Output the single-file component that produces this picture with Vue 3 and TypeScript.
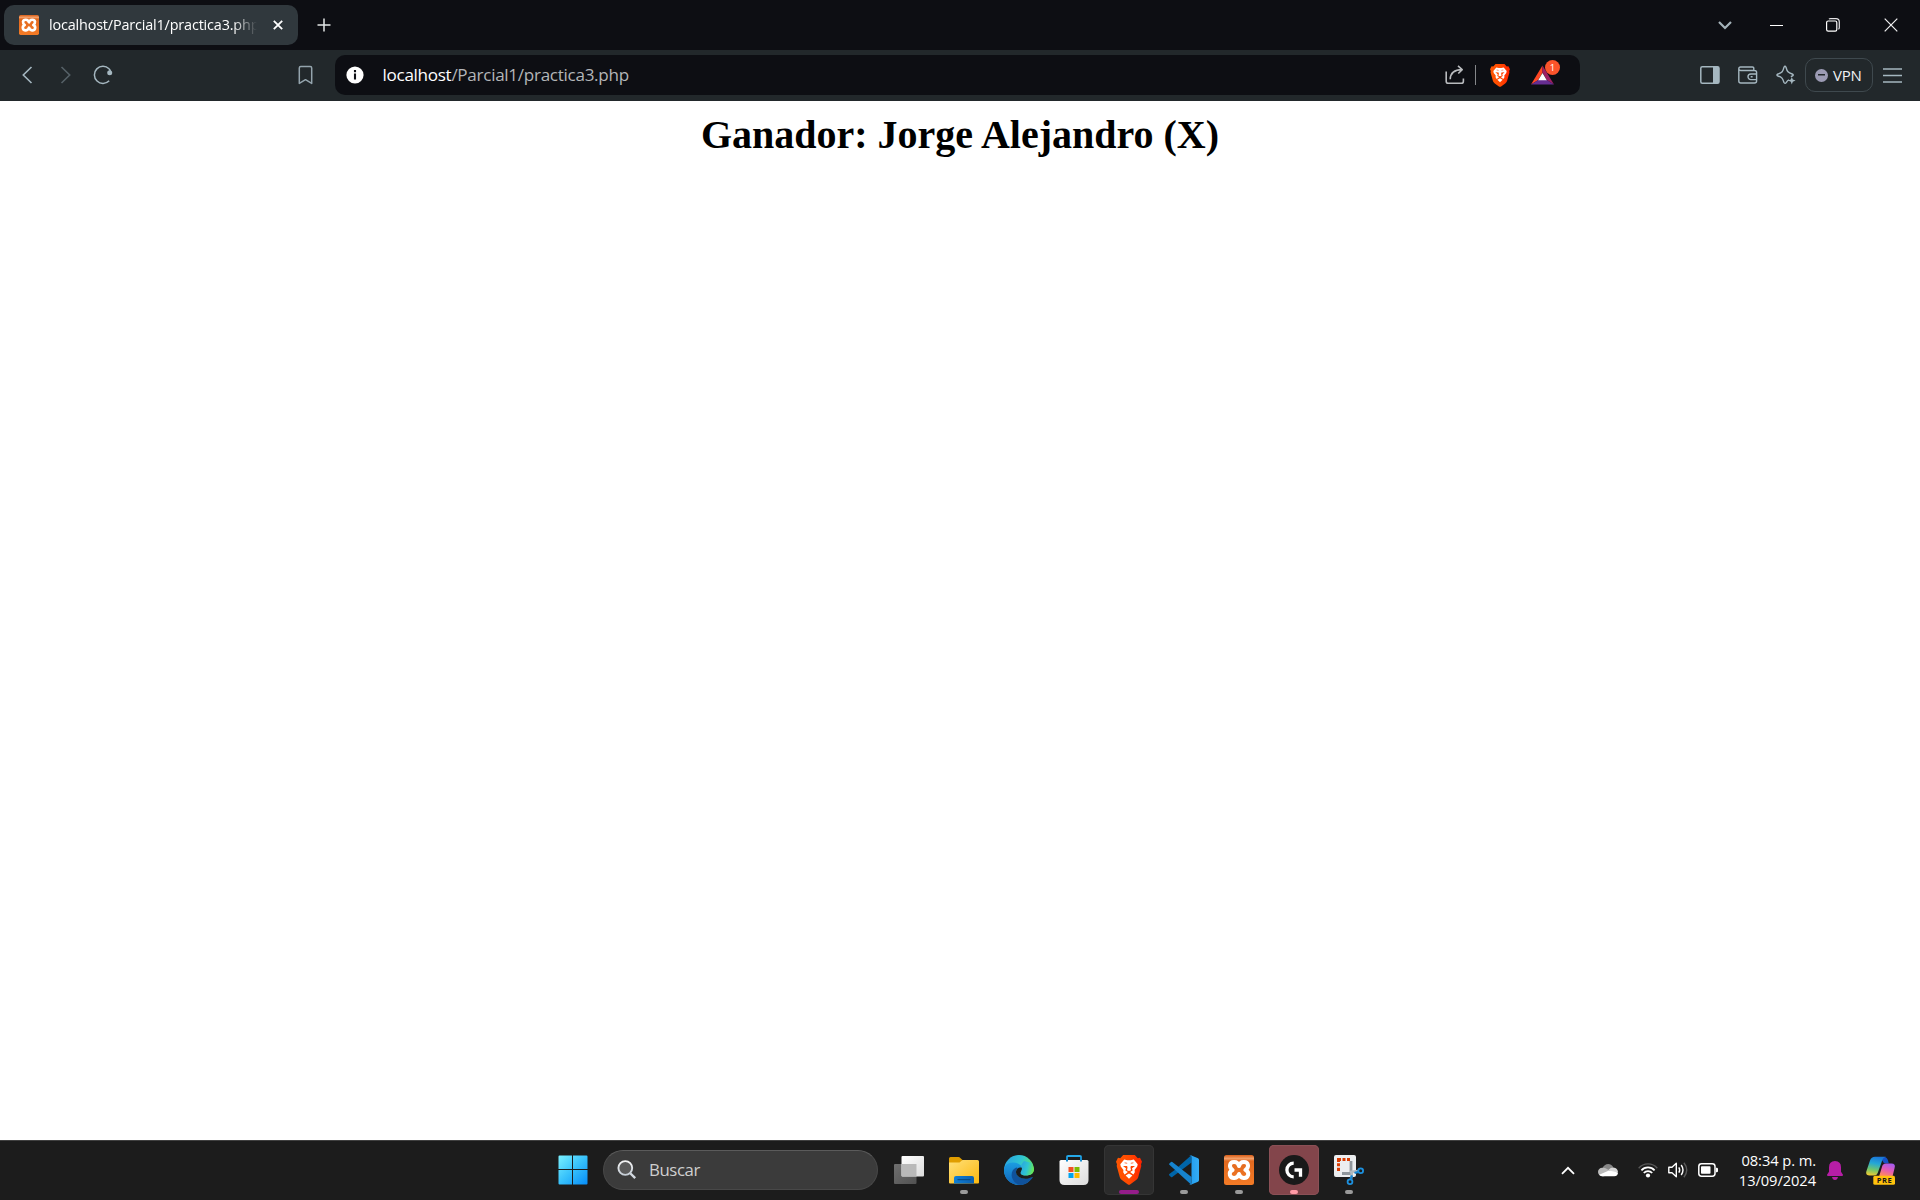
<script setup lang="ts">
const windowTitle = 'localhost/Parcial1/practica3.php'
const urlHost = 'localhost'
const urlPath = '/Parcial1/practica3.php'
const winner = 'Ganador: Jorge Alejandro (X)'
const clock = { time: '08:34 p. m.', date: '13/09/2024' }

interface TaskItem {
  id: string
  state?: 'open' | 'active' | 'alert'
}

const tasks: TaskItem[] = [
  { id: 'views' },
  { id: 'files', state: 'open' },
  { id: 'edge' },
  { id: 'store' },
  { id: 'brave', state: 'active' },
  { id: 'code', state: 'open' },
  { id: 'xampp', state: 'open' },
  { id: 'ghub', state: 'alert' },
  { id: 'snip', state: 'open' },
]
</script>

<template>
  <div class="desktop">
    <!-- shared artwork -->
    <svg class="defs" width="0" height="0" aria-hidden="true">
      <defs>
        <linearGradient id="g-brave" x1="0" y1="0" x2="1" y2="0">
          <stop offset="0" stop-color="#ff5601" /><stop offset=".5" stop-color="#ff4a00" /><stop offset="1" stop-color="#ff2200" />
        </linearGradient>
        <linearGradient id="g-win" x1="0" y1="0" x2="1" y2="1">
          <stop offset="0" stop-color="#7af1ff" /><stop offset=".5" stop-color="#37c1fb" /><stop offset="1" stop-color="#068cf8" />
        </linearGradient>
        <linearGradient id="g-lens" x1="0" y1="0" x2="0" y2="1">
          <stop offset="0" stop-color="#f4f4f4" /><stop offset="1" stop-color="#c5cdd6" />
        </linearGradient>
        <linearGradient id="g-glass" x1="0" y1="0" x2="1" y2="1">
          <stop offset="0" stop-color="#6f6f6f" /><stop offset="1" stop-color="#515151" />
        </linearGradient>
        <linearGradient id="g-white" x1="0" y1="0" x2="1" y2="1">
          <stop offset="0" stop-color="#ffffff" /><stop offset="1" stop-color="#dcdcdc" />
        </linearGradient>
        <linearGradient id="g-folder" x1="0" y1="0" x2="1" y2="1">
          <stop offset="0" stop-color="#ffe07a" /><stop offset="1" stop-color="#fcb80e" />
        </linearGradient>
        <linearGradient id="g-tray" x1="0" y1="0" x2="1" y2="0">
          <stop offset="0" stop-color="#0f7fd6" /><stop offset="1" stop-color="#0b5fae" />
        </linearGradient>
        <linearGradient id="g-edge-top" x1="0" y1=".3" x2="1" y2=".6">
          <stop offset="0" stop-color="#2aa5e0" /><stop offset=".5" stop-color="#2fc6d2" /><stop offset="1" stop-color="#6be94c" />
        </linearGradient>
        <linearGradient id="g-edge-mid" x1="0" y1="0" x2="0" y2="1">
          <stop offset="0" stop-color="#1b9de2" /><stop offset="1" stop-color="#1163b9" />
        </linearGradient>
        <linearGradient id="g-xampp" x1="0" y1="0" x2="0" y2="1">
          <stop offset="0" stop-color="#d85d16" /><stop offset=".12" stop-color="#f3a06a" /><stop offset=".2" stop-color="#e2691f" /><stop offset="1" stop-color="#f47b26" />
        </linearGradient>
        <linearGradient id="g-pilot-a" x1="0.5" y1="0" x2="0.3" y2="1">
          <stop offset="0" stop-color="#1b78d8" /><stop offset=".35" stop-color="#24a7d6" /><stop offset=".7" stop-color="#72c66a" /><stop offset="1" stop-color="#efcb32" />
        </linearGradient>
        <linearGradient id="g-pilot-b" x1=".7" y1="0" x2=".3" y2="1">
          <stop offset="0" stop-color="#a55bf0" /><stop offset=".5" stop-color="#e35bb7" /><stop offset="1" stop-color="#ff8a5c" />
        </linearGradient>
        <linearGradient id="g-code" x1="0" y1="0" x2="1" y2="0">
          <stop offset="0" stop-color="#1f9cf0" /><stop offset="1" stop-color="#35adf5" />
        </linearGradient>
        <symbol id="lion" viewBox="0 0 26 30">
          <path d="M7.2 0H18.8L21.8 3.2L24 2.8L26 6.8L25 9.2L25.3 11L22.2 22.2Q21.6 24 19.8 25.3L14.4 29.2Q13 30.4 11.6 29.2L6.2 25.3Q4.4 24 3.8 22.2L.7 11L1 9.2L0 6.8L2 2.8L4.2 3.2Z" fill="url(#g-brave)" />
          <path d="M8.2 4.5L11.3 5.2H14.7L17.8 4.5L21.7 9.2L21.2 11.6L18.6 15.1L18.8 17.2L17.4 19.6L14.6 17.6L14.4 16.8L16.6 15.5L16 13.3L19 10.9L14.9 11L14.5 12.6L15 15.2L13 16.1L11 15.2L11.5 12.6L11.1 11L7 10.9L10 13.3L9.4 15.5L11.6 16.8L11.4 17.6L8.6 19.6L7.2 17.2L7.4 15.1L4.8 11.6L4.3 9.2Z" fill="#fff" />
          <path d="M9.6 20.5L13 18.6L16.4 20.5L13 23.8Z" fill="#fff" />
          <path d="M8.6 7.8L11.2 8.3M17.4 7.8L14.8 8.3" stroke="#fb5420" stroke-width=".8" />
        </symbol>
        <symbol id="xampp-mark" viewBox="0 0 30 30">
          <rect width="30" height="30" rx="2.5" fill="url(#g-xampp)" />
          <path d="M15 11C13.6 5.6 6.6 6.2 6 10.2C5.7 12.4 7 13.8 8.6 15C6.2 16 5.3 18 5.9 20.2C7.2 24.2 13.6 24 15 19C16.4 24 22.8 24.2 24.1 20.2C24.7 18 23.8 16 21.4 15C23 13.8 24.3 12.4 24 10.2C23.4 6.2 16.4 5.6 15 11Z" fill="none" stroke="#fff" stroke-width="4" stroke-linejoin="round" />
        </symbol>
      </defs>
    </svg>

    <header class="tabstrip">
      <div class="tab">
        <svg class="favicon" width="20" height="20"><use href="#xampp-mark" /></svg>
        <span class="tab-title">{{ windowTitle }}</span>
        <svg class="tab-close" width="10" height="10" viewBox="0 0 10 10"><path d="M.8 .8L9.2 9.2M9.2 .8L.8 9.2" stroke="#fff" stroke-width="1.8" /></svg>
      </div>
      <svg class="new-tab" width="14" height="14" viewBox="0 0 14 14"><path d="M7 .5V13.5M.5 7H13.5" stroke="#e4e7e8" stroke-width="1.5" /></svg>
      <div class="window-controls">
        <svg class="chev" width="14" height="10" viewBox="0 0 14 10"><path d="M1 2L7 8L13 2" fill="none" stroke="#a5b3ba" stroke-width="2.2" /></svg>
        <svg class="mini" width="13" height="13" viewBox="0 0 13 13"><path d="M0 6.5H13" stroke="#fff" /></svg>
        <svg class="rest" width="14" height="14" viewBox="0 0 14 14"><rect x=".6" y="3" width="10.2" height="10.2" rx="1.6" fill="none" stroke="#fff" stroke-width="1.2" /><path d="M3 1.1Q3.4 .6 4.6 .6H10Q13.3 .6 13.3 4V9.4Q13.3 10.8 12.4 11.2" fill="none" stroke="#e4e4e6" stroke-width="1.2" /></svg>
        <svg class="quit" width="14" height="14" viewBox="0 0 14 14"><path d="M.7 .7L13.3 13.3M13.3 .7L.7 13.3" stroke="#f1f1f2" stroke-width="1.2" /></svg>
      </div>
    </header>

    <nav class="toolbar">
      <svg class="back" width="11" height="18" viewBox="0 0 11 18"><path d="M9.5 1L1.3 9L9.5 17" fill="none" stroke="#a5b7c0" stroke-width="1.6" /></svg>
      <svg class="forward" width="11" height="18" viewBox="0 0 11 18"><path d="M1.5 1L9.7 9L1.5 17" fill="none" stroke="#566167" stroke-width="1.6" /></svg>
      <svg class="reload" width="20" height="20" viewBox="0 0 20 20"><path d="M16 3.7A8.6 8.6 0 1 0 16.2 15.8" fill="none" stroke="#a5b7c0" stroke-width="1.5" /><circle cx="16.7" cy="7.7" r="2.5" fill="#a5b7c0" /><path d="M16 3.7L17.5 6" stroke="#a5b7c0" stroke-width="1.5" /></svg>
      <svg class="bookmark" width="15" height="20" viewBox="0 0 15 20"><path d="M2.8 1.5H12.2Q13.7 1.5 13.7 3V18.4L7.5 14.7L1.3 18.4V3Q1.3 1.5 2.8 1.5Z" fill="none" stroke="#94a4ad" stroke-width="1.5" stroke-linejoin="round" /></svg>

      <div class="address">
        <svg class="info" width="18" height="18" viewBox="0 0 18 18"><circle cx="9" cy="9" r="8.6" fill="#fff" /><path d="M9 4V6.2M9 7.6V13.4" stroke="#0e0f14" stroke-width="2.1" /></svg>
        <span class="url"><b>{{ urlHost }}</b>{{ urlPath }}</span>
        <svg class="share" width="20" height="20" viewBox="0 0 20 20"><path d="M1.2 6.5V16.2Q1.2 18.3 3.3 18.3H16.3Q18.4 18.3 18.4 16.2V13.4M5.2 14.2C5.4 8.5 9 4.7 17 4.6M13 .9L17.2 4.6L13.3 8.5" fill="none" stroke="#b9bbbe" stroke-width="1.6" stroke-linejoin="round" /></svg>
        <i class="divider"></i>
        <svg class="shield" width="20" height="23"><use href="#lion" /></svg>
        <div class="rewards">
          <svg width="23" height="20" viewBox="0 0 23 20"><path d="M11.5 .5L0 19.5L7.2 15L11.5 7.6Z" fill="#ff4724" /><path d="M11.5 .5L23 19.5L15.8 15L11.5 7.6Z" fill="#9e1f63" /><path d="M0 19.5H23L15.8 15H7.2Z" fill="#662d91" /><path d="M11.5 8L7.2 15.2H15.8Z" fill="#fff" /></svg>
          <span class="badge">1</span>
        </div>
      </div>

      <svg class="side" width="20" height="18" viewBox="0 0 20 18"><rect x=".8" y=".8" width="18.2" height="16.4" rx="1.5" fill="none" stroke="#a5b7c0" stroke-width="1.5" /><path d="M13 1H19V17H13Z" fill="#a5b7c0" /></svg>
      <svg class="wallet" width="20" height="18" viewBox="0 0 20 18"><path d="M15.8 4V2.4Q15.8 1 14.4 1H2.5Q.8 1 .8 2.7V15Q.8 17 2.8 17H16.5Q18.6 17 18.6 15V6.5Q18.6 4.5 16.5 4.5H2.7Q.8 4.3 .8 2.7M18.6 8H12.8A2.8 2.8 0 0 0 12.8 13.6H18.6M12.7 10.8H14.6" fill="none" stroke="#a5b7c0" stroke-width="1.4" /></svg>
      <svg class="leo" width="20" height="20" viewBox="0 0 20 20"><path d="M13 14.8C11.6 15.2 10.8 16.5 10.2 17.6Q9 19 7.9 17.3C6.7 13.4 6 12.2 2 11Q-.2 10 2 9C6.2 7.7 6.9 6.7 8 2.2Q9 .2 10 2.2C11.2 6.7 12 7.7 16.2 9Q18.3 10 16.2 11L14.8 11.6" fill="none" stroke="#a5b7c0" stroke-width="1.4" /><path d="M15.8 12L16.8 14.6L19.6 15.6L16.8 16.7L15.8 19.4L14.8 16.7L12 15.6L14.8 14.6Z" fill="#a5b7c0" /></svg>
      <div class="vpn"><i></i><span>VPN</span></div>
      <svg class="menu" width="19" height="15" viewBox="0 0 19 15"><path d="M0 1H19M0 7.5H19M0 14H19" stroke="#a5b7c0" stroke-width="1.5" /></svg>
    </nav>

    <main class="page"><h1>{{ winner }}</h1></main>

    <footer class="taskbar">
      <svg class="start" width="30" height="30" viewBox="0 0 30 30"><path d="M1.5 .5H14V14H.5V1.5Q.5 .5 1.5 .5ZM15 .5H28.5Q29.5 .5 29.5 1.5V14H15ZM.5 15H14V29.5H1.5Q.5 29.5 .5 28.5ZM15 15H29.5V28.5Q29.5 29.5 28.5 29.5H15Z" fill="url(#g-win)" /></svg>
      <div class="search">
        <svg width="20" height="20" viewBox="0 0 20 20"><path d="M13 13L18.2 18.2" stroke="#d3d9e0" stroke-width="2.4" /><circle cx="8.3" cy="8" r="6.9" fill="#5a5a5a" stroke="url(#g-lens)" stroke-width="1.9" /></svg>
        <span>Buscar</span>
      </div>

      <div class="tasks">
        <div v-for="t in tasks" :key="t.id" class="task" :class="t.state">
          <svg width="30" height="30" viewBox="0 0 30 30">
            <template v-if="t.id === 'views'">
              <rect x="0" y="9" width="22.5" height="20" rx="1" fill="url(#g-glass)" />
              <rect x="7.5" y="1" width="22.5" height="20.5" rx="1" fill="url(#g-white)" />
              <path d="M7.5 9H22.5V21.5H8.5Q7.5 21.5 7.5 20.5Z" fill="#b9b9b9" />
            </template>
            <template v-else-if="t.id === 'files'">
              <path d="M0 3.5Q0 2 1.5 2H9.5Q10.5 2 11.3 2.9L13.5 5V9H0Z" fill="#e09d00" />
              <path d="M0 7.5H10.5L13.5 5H28.5Q30 5 30 6.5V27.5Q30 28.5 29 28.5H1Q0 28.5 0 27.5Z" fill="url(#g-folder)" />
              <path d="M5 28.5V23Q5 21 7 21H23Q25 21 25 23V28.5Z" fill="url(#g-tray)" />
              <path d="M8.5 24.6H21.5" stroke="#074b86" stroke-width="1.2" />
            </template>
            <template v-else-if="t.id === 'edge'">
              <circle cx="15" cy="15" r="15" fill="url(#g-edge-top)" />
              <path d="M0 15C0 10.5 4 7.4 9 7.4C14 7.4 17.8 10 18.2 14C16.5 11.8 11.8 13 12 17.5C12.2 22 17 25.2 22 24.7C25 24.4 27 23.2 28 22.5C25.5 27 20.5 30 15 30C6.5 30 0 23.5 0 15Z" fill="url(#g-edge-mid)" />
              <path d="M12.3 12.5C8.5 13.8 6.8 18.5 8 22.5C9.3 27 13 29.6 17 30C22 29.5 26.5 26.2 28.8 22.2Q29 21.2 27.8 21.8C20 25.5 11.8 22 12 16.5C12.1 14.8 12.7 13.8 13.6 13Z" fill="#10529b" />
              <path d="M17.8 12.8C18.7 15.5 16.9 16.8 16.7 18C16.5 20 20 20.8 23.5 20.5C27.5 20.1 29.7 17.8 30 15V22H28C21 26.2 11.5 22.2 12 16.7C12.5 12.7 15.8 11.8 17.8 12.8Z" fill="#1c1c1c" />
              <path d="M17.2 10C19.2 14.5 16.7 16.3 16.7 17.8C16.6 19.9 20 20.6 23.5 20.3C27.5 20 29.7 17.8 30 14L28 8L20 6Z" fill="url(#g-edge-top)" />
            </template>
            <template v-else-if="t.id === 'store'">
              <path d="M8 7V2.2Q8 1 9.2 1H20.8Q22 1 22 2.2V7" fill="none" stroke="#25a9e8" stroke-width="2" />
              <path d="M.5 6.5Q.5 5 2 5H28Q29.5 5 29.5 6.5V25Q29.5 30 24.5 30H5.5Q.5 30 .5 25Z" fill="url(#g-white)" />
              <path d="M8 2V6.5M22 2V6.5" stroke="#168ed0" stroke-width="2" />
              <path d="M9.5 12H14.5V17H9.5Z" fill="#f25022" /><path d="M15.5 12H20.5V17H15.5Z" fill="#7fba00" /><path d="M9.5 18H14.5V23H9.5Z" fill="#00a4ef" /><path d="M15.5 18H20.5V23H15.5Z" fill="#ffb900" />
            </template>
            <use v-else-if="t.id === 'brave'" href="#lion" x="2" y="0" width="26" height="30" />
            <template v-else-if="t.id === 'code'">
              <path d="M22.3 .3L5.7 15L0.3 19.1Q-.3 19.7 .4 20.5L2 22Q2.6 22.4 3.3 22L22.5 7.5Z" fill="#0065a9" />
              <path d="M22.3 29.7L.4 9.8Q-.3 9.2 .4 8.5L2 7Q2.6 6.6 3.3 7L22.5 22.1Z" fill="#1683ce" />
              <path d="M21.8 29.8Q20.8 30.1 20.1 29.2Q22.5 30.3 22.5 27.5V2.5Q22.5 -.3 20.1 .8Q20.8 -.1 21.8 .2L29 3.3Q30 3.8 30 5V25Q30 26.2 29 26.7Z" fill="url(#g-code)" />
            </template>
            <use v-else-if="t.id === 'xampp'" href="#xampp-mark" width="30" height="30" />
            <template v-else-if="t.id === 'ghub'">
              <circle cx="15" cy="15" r="15" fill="#191919" />
              <path d="M14.7 8.2A6.8 6.8 0 0 0 14.7 21.8M15.5 15H21.5V21.8" fill="none" stroke="#fff" stroke-width="3.3" />
            </template>
            <template v-else>
              <rect x="0" y="0" width="22" height="22" rx="2" fill="#eceef0" />
              <path d="M3 3H7V6H6V7H3ZM8.5 3H11.5V6H8.5ZM13 3H16V6H13ZM3 8.3H6V11.3H3ZM3 12.8H6V16H3Z" fill="#d83b01" />
              <path d="M17 6V18.5H8" fill="none" stroke="#90979d" stroke-width="2.8" />
              <path d="M16 17L24 16M18 17L17 24" stroke="#b0b8be" stroke-width="2.5" />
              <circle cx="26.7" cy="15.7" r="2.4" fill="none" stroke="#1d91df" stroke-width="1.8" /><circle cx="16" cy="26.7" r="2.4" fill="none" stroke="#1d91df" stroke-width="1.8" />
              <path d="M20.5 18L24.4 16.8M18 20.4L16.8 24.2" stroke="#1683ce" stroke-width="2.3" />
            </template>
          </svg>
          <i v-if="t.state" class="mark"></i>
        </div>
      </div>

      <div class="tray">
        <svg class="up" width="14" height="9" viewBox="0 0 14 9"><path d="M1 7.8L7 1.8L13 7.8" fill="none" stroke="#fff" stroke-width="1.8" /></svg>
        <svg class="cloud" width="20" height="14" viewBox="0 0 20 14"><path d="M4.5 5.2C6 1 12 -1.2 15.3 4.2L11 8L5 7Z" fill="#868686" /><path d="M4.2 13.2A4.2 4.2 0 0 1 4.2 4.8Q6.2 4.2 9 6L14 9L6 13.2Z" fill="#bababa" /><path d="M10.5 6.8Q13.5 3.9 16.4 4.8Q19.7 5.6 20 9L15.8 10.5Z" fill="#d6d6d6" /><path d="M1.2 11.8L11 7.5L20 9.5Q20 13.2 16.2 13.2H4.2Q2.2 13.2 1.2 11.8Z" fill="#fff" /></svg>
        <svg class="wifi" width="20" height="16" viewBox="0 0 20 16"><path d="M.7 6.2A12.1 12.1 0 0 1 19.3 6.2" fill="none" stroke="#595959" stroke-width="1.4" /><path d="M3.4 8.4A8.7 8.7 0 0 1 16.6 8.4M5.8 11A5.5 5.5 0 0 1 14.2 11" fill="none" stroke="#fff" stroke-width="1.7" /><circle cx="10" cy="13.5" r="2.1" fill="#fff" /></svg>
        <svg class="sound" width="20" height="18" viewBox="0 0 20 18"><path d="M.8 6.2H4L8.3 2.3V15.7L4 11.8H.8Z" fill="none" stroke="#fff" stroke-width="1.4" stroke-linejoin="round" /><path d="M10.8 6.3Q12.6 9 10.8 11.7M13.2 4Q16.8 9 13.2 14" fill="none" stroke="#fff" stroke-width="1.4" /><path d="M15.9 1.8Q21.6 9 15.9 16.2" fill="none" stroke="#595959" stroke-width="1.4" /></svg>
        <svg class="battery" width="20" height="14" viewBox="0 0 20 14"><rect x=".8" y=".8" width="16.2" height="12.4" rx="2.7" fill="none" stroke="#fff" stroke-width="1.5" /><rect x="3" y="3.2" width="9.5" height="7.6" rx=".8" fill="#fff" /><path d="M18 4.7H18.8Q20 4.7 20 6V8Q20 9.3 18.8 9.3H18Z" fill="#fff" /></svg>
        <div class="clock"><span>{{ clock.time }}</span><span class="date">{{ clock.date }}</span></div>
        <svg class="bell" width="16" height="19" viewBox="0 0 16 19"><path d="M8 0Q14 .2 14 6.2V10.8L16 13.7Q16 15 15 15H1Q0 15 0 13.7L2 10.8V6.2Q2 .2 8 0ZM5 16H11Q10.4 19 8 19Q5.6 19 5 16Z" fill="#b71ea6" /></svg>
        <svg class="copilot" width="30" height="29" viewBox="0 0 30 29"><path d="M16 1H18.5Q21 1 22 4.5L22.8 7.2H18L15.3 3Z" fill="#1551c7" /><path d="M9 .8H20Q17.2 1.3 16 5L11.7 17Q10.8 19.5 8 19.5H3.5Q-.5 19.5 .3 15.5L4 4.5Q5.4 .8 9 .8Z" fill="url(#g-pilot-a)" /><path d="M20 7.5H25.3Q30 7.5 28.6 12L26.6 20H13.2L16.2 10.3Q17 7.5 20 7.5Z" fill="url(#g-pilot-b)" /><rect x="7.3" y="19.8" width="21.7" height="9" rx="1.6" fill="#ffc20d" /><text x="18.4" y="27" text-anchor="middle" font-size="7.6" font-weight="700" letter-spacing=".5" fill="#161616">PRE</text></svg>
      </div>
    </footer>
  </div>
</template>

<style>
body {
  margin: 0;
  overflow: hidden;
}
</style>

<style scoped>
.desktop {
  width: 1920px;
  height: 1200px;
  display: flex;
  flex-direction: column;
  overflow: hidden;
  background: #fff;
  font-family: "Open Sans", "Noto Sans", sans-serif;
}
.desktop svg {
  flex: none;
  display: block;
}
.defs {
  position: absolute;
}
.tabstrip {
  display: flex;
  align-items: center;
  height: 50px;
  flex: none;
  background: #0d0e13;
}
.tab {
  box-sizing: border-box;
  display: flex;
  align-items: center;
  width: 294px;
  height: 40px;
  margin-left: 4px;
  padding-left: 15px;
  border-radius: 10px;
  background: #30383d;
}
.tab-title {
  width: 208px;
  margin-left: 10px;
  overflow: hidden;
  white-space: nowrap;
  color: #fff;
  font-size: 14.4px;
  line-height: 20px;
  letter-spacing: -0.16px;
  -webkit-mask-image: linear-gradient(90deg, #000 184px, transparent 208px);
  mask-image: linear-gradient(90deg, #000 184px, transparent 208px);
}
.tab-close {
  margin-left: 15.5px;
}
.new-tab {
  margin-left: 18.5px;
}
.window-controls {
  display: flex;
  align-items: center;
  margin-left: auto;
}
.mini {
  margin-left: 38px;
}
.rest {
  margin-left: 43px;
}
.quit {
  margin: 0 22px 0 44px;
}
.toolbar {
  display: flex;
  align-items: center;
  box-sizing: border-box;
  height: 51px;
  flex: none;
  padding-bottom: 1px;
  background: #22282b;
}
.back {
  margin-left: 22px;
}
.forward {
  margin-left: 26.5px;
}
.reload {
  margin-left: 22px;
}
.bookmark {
  margin-left: 185.5px;
}
.address {
  display: flex;
  align-items: center;
  width: 1245px;
  height: 40px;
  margin-left: 22px;
  border-radius: 10px;
  background: #0d0e13;
}
.info {
  margin-left: 11px;
}
.url {
  width: 1053px;
  margin-left: 18.5px;
  color: #b3b5b8;
  font-size: 17.1px;
  line-height: 24px;
  letter-spacing: -0.3px;
  white-space: nowrap;
}
.url b {
  color: #fff;
  font-weight: 400;
}
.share {
  margin-left: 9.5px;
}
.divider {
  width: 1px;
  height: 20px;
  margin-left: 10px;
  background: #85878a;
}
.shield {
  margin-left: 14px;
}
.rewards {
  position: relative;
  margin-left: 21px;
}
.badge {
  position: absolute;
  left: 14px;
  top: -5px;
  width: 15px;
  height: 15px;
  border-radius: 50%;
  background: #fb542b;
  color: #fff;
  font-size: 9.5px;
  line-height: 15px;
  text-align: center;
}
.side {
  margin-left: 120px;
}
.wallet {
  margin-left: 18px;
}
.leo {
  margin-left: 18px;
}
.vpn {
  box-sizing: border-box;
  display: flex;
  align-items: center;
  width: 68px;
  height: 34px;
  margin-left: 9px;
  padding-left: 9px;
  border: 1px solid #3f494e;
  border-radius: 10px;
}
.vpn i {
  display: flex;
  width: 13px;
  height: 13px;
  border-radius: 50%;
  background: linear-gradient(#22282b, #22282b) center / 7px 1.5px no-repeat #9c9bb4;
}
.vpn span {
  margin-left: 5px;
  color: #f1f2f4;
  font-size: 15px;
  line-height: 20px;
  letter-spacing: -0.2px;
}
.menu {
  margin-left: 10px;
}
.page {
  flex: 1;
  background: #fff;
}
.page h1 {
  margin: 11px 0 0;
  color: #000;
  font: bold 40px/46px "Liberation Serif", "Times New Roman", serif;
  text-align: center;
}
.taskbar {
  box-sizing: border-box;
  display: flex;
  align-items: center;
  height: 60px;
  flex: none;
  padding-bottom: 1px;
  border-top: 1px solid #404040;
  background: #1c1c1c;
}
.start {
  margin-left: 557.5px;
}
.search {
  box-sizing: border-box;
  display: flex;
  align-items: center;
  width: 275px;
  height: 40px;
  margin-left: 15.5px;
  padding-left: 13px;
  border: 1px solid #484848;
  border-top-color: #5b5b5b;
  border-radius: 20px;
  background: #3b3b3b;
}
.search span {
  margin-left: 12px;
  color: #cfcfcf;
  font-size: 16.8px;
  line-height: 24px;
  letter-spacing: -0.4px;
}
.tasks {
  display: flex;
  gap: 5px;
  margin-left: 6px;
}
.task {
  position: relative;
  box-sizing: border-box;
  display: flex;
  align-items: center;
  justify-content: center;
  width: 50px;
  height: 50px;
  border-radius: 5px;
}
.task.active {
  background: #2b2b2b;
  box-shadow: inset 0 0 0 1px #353535;
}
.task.alert {
  background: #83454b;
  box-shadow: inset 0 0 0 1px #8b5056;
}
.mark {
  position: absolute;
  left: 21px;
  bottom: 1px;
  width: 8px;
  height: 4px;
  border-radius: 2px;
  background: #9a9a9a;
}
.active .mark {
  left: 15px;
  width: 20px;
  background: #951d8a;
}
.alert .mark {
  background: #ff9aa6;
}
.tray {
  display: flex;
  align-items: center;
  margin-left: auto;
}
.cloud {
  margin-left: 23px;
}
.wifi {
  margin-left: 20px;
}
.sound {
  margin-left: 10px;
}
.battery {
  margin-left: 10px;
}
.clock {
  display: flex;
  flex-direction: column;
  align-items: flex-end;
  width: 98px;
  color: #fff;
  font-size: 14.7px;
  line-height: 20px;
  letter-spacing: -0.08px;
  white-space: nowrap;
}
.bell {
  margin-left: 11px;
}
.copilot {
  margin: 0 24px 0 23px;
}
</style>
